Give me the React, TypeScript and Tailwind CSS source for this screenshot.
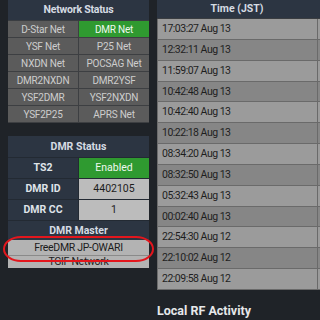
const networks = [
  ['D-Star Net', 'DMR Net'],
  ['YSF Net', 'P25 Net'],
  ['NXDN Net', 'POCSAG Net'],
  ['DMR2NXDN', 'DMR2YSF'],
  ['YSF2DMR', 'YSF2NXDN'],
  ['YSF2P25', 'APRS Net'],
];

const times = [
  '17:03:27 Aug 13',
  '12:32:11 Aug 13',
  '11:59:07 Aug 13',
  '10:42:48 Aug 13',
  '10:42:40 Aug 13',
  '10:22:18 Aug 13',
  '08:34:20 Aug 13',
  '08:32:50 Aug 13',
  '05:32:43 Aug 13',
  '00:02:40 Aug 13',
  '22:54:30 Aug 12',
  '22:10:02 Aug 12',
  '22:09:58 Aug 12',
];

function NetCell({ label, on }: { label: string; on?: boolean }) {
  return (
    <div
      className={`h-[16px] flex items-center justify-center text-[10px] tracking-[-0.2px] ${
        on ? 'bg-[#2f9a30] text-[#eef8ee]' : 'bg-[#5b5b5b] text-[#cdcdcd]'
      }`}
    >
      {label}
    </div>
  );
}

function StatusRow({ label, value, green }: { label: string; value: string; green?: boolean }) {
  return (
    <div className="grid grid-cols-[70px_1fr] h-[21px] border-t border-[#232a33]">
      <div className="flex items-center justify-center text-[10.5px] font-bold text-[#dfe3e8]">{label}</div>
      <div
        className={`flex items-center justify-center text-[10.5px] border-l border-[#232a33] ${
          green ? 'bg-[#2f9a30] text-[#eef8ee]' : 'bg-[#bcbcbc] text-[#1c1c1c]'
        }`}
      >
        {value}
      </div>
    </div>
  );
}

export default function App() {
  return (
    <div className="w-[320px] h-[320px] overflow-hidden bg-[#1f2328] flex font-[family-name:Roboto,sans-serif]">
      {/* left column */}
      <div className="w-[141px] ml-[8px] shrink-0 relative">
        <div className="h-[21px] bg-[#2c3542] border-b border-[#3a3d41] flex items-center justify-center text-[10.5px] font-bold tracking-[-0.2px] text-[#d5dbe2]">
          Network Status
        </div>
        <div className="grid grid-cols-2 gap-px bg-[#3d3f42] border-b border-[#3d3f42]">
          {networks.map(([a, b]) => [
            <NetCell key={a} label={a} />,
            <NetCell key={b} label={b} on={b === 'DMR Net'} />,
          ])}
        </div>

        <div className="mt-[13px] bg-[#2c3542]">
          <div className="h-[21px] flex items-center justify-center text-[10.5px] font-bold text-[#d5dbe2]">
            DMR Status
          </div>
          <StatusRow label="TS2" value="Enabled" green />
          <StatusRow label="DMR ID" value="4402105" />
          <StatusRow label="DMR CC" value="1" />
          <div className="h-[20px] border-t border-[#232a33] flex items-center justify-center text-[10.5px] font-bold text-[#d5dbe2]">
            DMR Master
          </div>
          <div className="h-[15px] bg-[#b3b3b3] flex items-center justify-center text-[10.5px] tracking-[-0.3px] text-[#1c1c1c]">
            FreeDMR JP-OWARI
          </div>
          <div className="h-[13px] bg-[#b3b3b3] border-t border-[#8a8a8a] flex items-center justify-center text-[10.5px] tracking-[-0.3px] text-[#1c1c1c] overflow-hidden leading-none">
            TGIF Network
          </div>
        </div>

        {/* annotation */}
        <div className="absolute left-[-5px] top-[236px] w-[151px] h-[26px] border-2 border-[#e3161d] rounded-[18px/13px]" />
      </div>

      {/* right column */}
      <div className="ml-[8px] w-[200px] shrink-0">
        <div className="h-[19px] bg-[#2c3542] border-b border-[#3a3d41] flex">
          <div className="w-[160px] flex items-center justify-center text-[10.5px] font-bold text-[#d5dbe2]">
            Time (JST)
          </div>
        </div>
        <div className="border-l border-[#6c6c6c]">
          {times.map((t, i) => (
            <div
              key={t}
              className={`h-[20.85px] flex border-b border-[#6a6a6a] ${
                i % 2 === 0 ? 'bg-[#9b9b9b]' : 'bg-[#868686]'
              }`}
            >
              <div className="w-[159px] flex items-center pl-[4px] text-[10.5px] tracking-[-0.5px] text-[#1e1e1e]">
                {t}
              </div>
              <div className="flex-1 border-l border-[#6a6a6a]" />
            </div>
          ))}
        </div>
        <div className="mt-[15px] text-[12.5px] font-bold text-[#e6e8ea] leading-none">Local RF Activity</div>
      </div>
    </div>
  );
}
